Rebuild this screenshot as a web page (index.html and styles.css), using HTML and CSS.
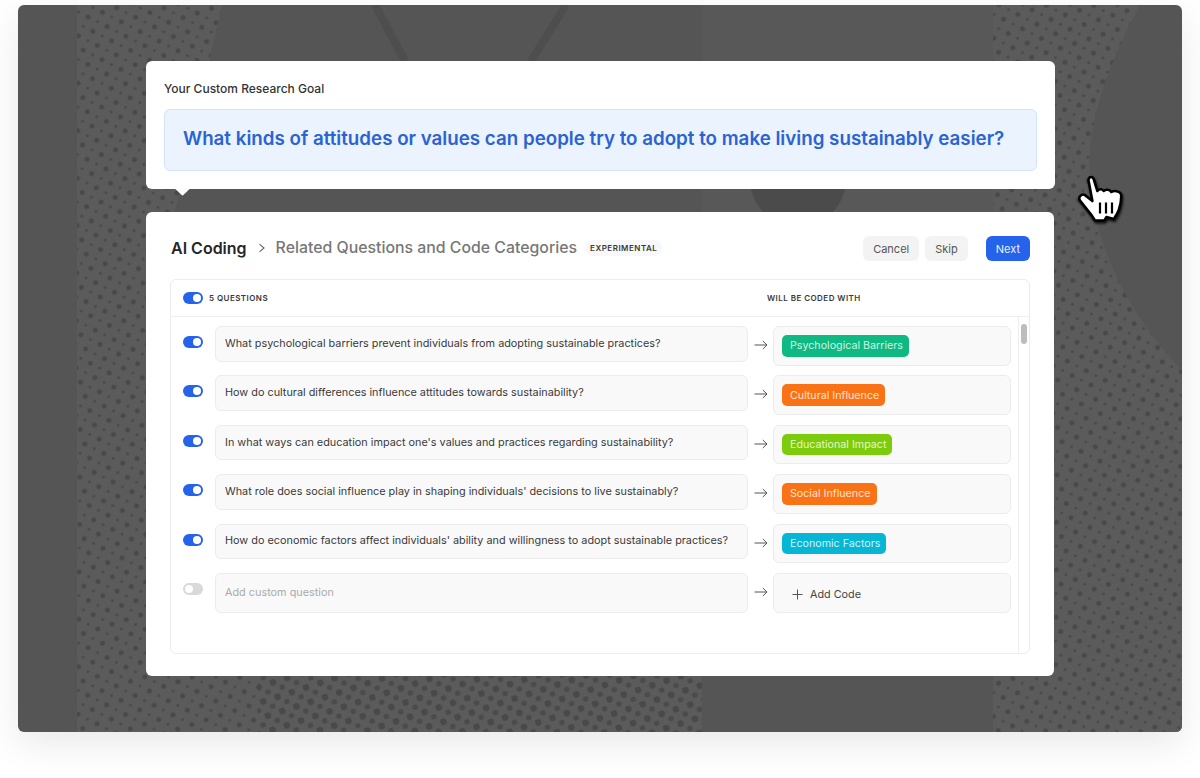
FILE: index.html
```html
<!DOCTYPE html>
<html lang="en">
<head>
<meta charset="utf-8">
<title>AI Coding</title>
<link rel="stylesheet" href="styles.css">
</head>
<body>
<div class="stage">
  <svg class="backdrop" viewBox="0 0 1164 727" aria-hidden="true">
    <defs>
      <pattern id="dots" width="15" height="15" patternUnits="userSpaceOnUse" patternTransform="rotate(-18)">
        <rect width="15" height="15" fill="#5b5b5b"/>
        <circle cx="3" cy="3" r="2.5" fill="#494949"/>
        <circle cx="10.5" cy="10.5" r="1.6" fill="#4b4b4b"/>
      </pattern>
      <pattern id="bigdots" width="15" height="15" patternUnits="userSpaceOnUse" patternTransform="rotate(-18)">
        <circle cx="3" cy="3" r="3.4" fill="#494949"/>
        <circle cx="10.5" cy="10.5" r="2.8" fill="#4b4b4b"/>
      </pattern>
      <clipPath id="leftshape"><path d="M59 0H204L157 207V650H684V727H59Z"/></clipPath>
    </defs>
    <rect x="684" y="0" width="291" height="212" fill="#585858"/>
    <circle cx="780" cy="174" r="48" fill="#4b4b4b"/>
    <path d="M357 0L387 56M548 0L513 56" stroke="#4e4e4e" stroke-width="8" fill="none"/>
    <path d="M59 0H204L157 207V650H684V727H59Z" fill="url(#dots)"/>
    <path d="M975 0H1122C1090 60 1068 120 1072 170C1076 250 1120 320 1164 365V727H975Z" fill="url(#dots)"/>
    <g clip-path="url(#leftshape)"><rect x="240" y="671" width="444" height="56" fill="url(#bigdots)"/></g>
  </svg>

  <section class="card goal">
    <div class="goal-label">Your Custom Research Goal</div>
    <div class="goal-box">What kinds of attitudes or values can people try to adopt to make living sustainably easier?</div>
    <span class="notch"></span>
  </section>

  <section class="card coding">
    <header class="head">
      <h1 class="title">AI Coding</h1>
      <svg class="chev" viewBox="0 0 8 10" aria-hidden="true"><path d="M1.5 1.2L6 5L1.5 8.8"/></svg>
      <h2 class="subtitle">Related Questions and Code Categories</h2>
      <span class="chip">EXPERIMENTAL</span>
      <div class="actions">
        <button class="btn">Cancel</button>
        <button class="btn">Skip</button>
        <button class="btn primary">Next</button>
      </div>
    </header>

    <div class="table">
      <div class="thead">
        <span class="toggle on"></span>
        <span class="cap count">5 QUESTIONS</span>
        <span class="cap coded">WILL BE CODED WITH</span>
      </div>
      <div class="tbody">
        <div class="rows">
          <div class="row">
            <span class="toggle on"></span>
            <div class="q">What psychological barriers prevent individuals from adopting sustainable practices?</div>
            <svg class="arrow" viewBox="0 0 14 10" aria-hidden="true"><path d="M0.5 5H13M8.8 1L13 5L8.8 9"/></svg>
            <div class="code"><span class="tag green">Psychological Barriers</span></div>
          </div>
          <div class="row">
            <span class="toggle on"></span>
            <div class="q">How do cultural differences influence attitudes towards sustainability?</div>
            <svg class="arrow" viewBox="0 0 14 10" aria-hidden="true"><path d="M0.5 5H13M8.8 1L13 5L8.8 9"/></svg>
            <div class="code"><span class="tag orange">Cultural Influence</span></div>
          </div>
          <div class="row">
            <span class="toggle on"></span>
            <div class="q">In what ways can education impact one's values and practices regarding sustainability?</div>
            <svg class="arrow" viewBox="0 0 14 10" aria-hidden="true"><path d="M0.5 5H13M8.8 1L13 5L8.8 9"/></svg>
            <div class="code"><span class="tag lime">Educational Impact</span></div>
          </div>
          <div class="row">
            <span class="toggle on"></span>
            <div class="q">What role does social influence play in shaping individuals' decisions to live sustainably?</div>
            <svg class="arrow" viewBox="0 0 14 10" aria-hidden="true"><path d="M0.5 5H13M8.8 1L13 5L8.8 9"/></svg>
            <div class="code"><span class="tag orange">Social Influence</span></div>
          </div>
          <div class="row">
            <span class="toggle on"></span>
            <div class="q">How do economic factors affect individuals' ability and willingness to adopt sustainable practices?</div>
            <svg class="arrow" viewBox="0 0 14 10" aria-hidden="true"><path d="M0.5 5H13M8.8 1L13 5L8.8 9"/></svg>
            <div class="code"><span class="tag cyan">Economic Factors</span></div>
          </div>
          <div class="row">
            <span class="toggle off"></span>
            <div class="q custom">Add custom question</div>
            <svg class="arrow" viewBox="0 0 14 10" aria-hidden="true"><path d="M0.5 5H13M8.8 1L13 5L8.8 9"/></svg>
            <div class="code add">
              <svg class="plus" viewBox="0 0 11 11" aria-hidden="true"><path d="M5.5 0.5V10.5M0.5 5.5H10.5"/></svg>
              <span>Add Code</span>
            </div>
          </div>
        </div>
        <div class="track"><span class="thumb"></span></div>
      </div>
    </div>
  </section>

  <svg class="cursor" viewBox="0 0 52 56" aria-hidden="true">
    <path class="hand" d="M12.4 8C13 4 17 4 18 8L21.4 19C23.4 16.6 26.4 16.8 27.6 19C29.8 17 33.8 17.4 35.4 20C38 18.2 43.6 19 45 22C45.8 27 44.4 33 42.8 38C41.4 42 39.6 44.4 37.8 47L30.5 45L28.4 48.5H19L15.7 43.4L3.8 28.4C2 25 5.6 21.4 8.8 23L16.4 29Z"/>
    <path class="bars" d="M24 30.5V41.5M30 30.5V41.5M36 30.5V41.5"/>
  </svg>
</div>
</body>
</html>
```

FILE: styles.css
```css
* { box-sizing: border-box; }
html, body { margin: 0; height: 100%; background: #fff; overflow: hidden; }
body { font-family: Inter, "Liberation Sans", sans-serif; color: #2f2f2f; }

.stage {
  position: relative;
  width: 1164px;
  height: 727px;
  margin: 5px 18px 0;
  padding: 56px 128px 0;
  background: #555;
  border-radius: 6px;
  box-shadow: 0 12px 36px rgba(0, 0, 0, .09);
}
.backdrop { position: absolute; inset: 0; width: 100%; height: 100%; border-radius: 6px; filter: blur(.4px); }

.card { position: relative; background: #fff; border-radius: 6px; }

.goal { width: 909px; height: 128px; padding: 20px 18px 0; }
.goal-label { font-size: 12px; font-weight: 500; line-height: 16px; color: #333; }
.goal-box {
  margin-top: 12px;
  height: 62px;
  padding: 0 0 3px 18px;
  display: flex;
  align-items: center;
  background: #eaf3fe;
  border: 1px solid #d3e4f8;
  border-radius: 6px;
  color: #2b63d3;
  font-size: 18.75px;
  font-weight: 600;
  white-space: nowrap;
}
.notch {
  position: absolute;
  left: 29px;
  bottom: -6px;
  width: 15px;
  height: 15px;
  background: #fff;
  border-radius: 2px;
  transform: rotate(45deg) scale(.8);
}

.coding { margin-top: 23px; width: 908px; height: 464px; padding: 24px 24px 0; }

.head { display: flex; align-items: center; height: 25px; padding-bottom: 2px; }
.title { margin: 0 0 0 1px; font-size: 16px; font-weight: 600; color: #262626; }
.chev { width: 8px; height: 10px; margin: 0 10px 0 11px; }
.chev path { fill: none; stroke: #666; stroke-width: 1.1; }
.subtitle { margin: 0; font-size: 15.85px; font-weight: 500; color: #777; white-space: nowrap; }
.chip {
  margin-left: 8px;
  padding: 3px 5px;
  background: #f8f8f8;
  border-radius: 8px;
  font-size: 8px;
  font-weight: 600;
  letter-spacing: .5px;
  color: #3a3a3a;
}
.actions { margin-left: auto; margin-bottom: -2px; display: flex; gap: 6px; }
.btn {
  height: 25px;
  padding: 0 10px;
  border: 0;
  border-radius: 6px;
  background: #f3f3f3;
  font: 400 11px Inter, "Liberation Sans", sans-serif;
  color: #555;
}
.primary { margin-left: 12px; background: #2563eb; color: #eaf1ff; }

.table {
  margin-top: 18px;
  width: 860px;
  height: 375px;
  border: 1px solid #ececec;
  border-radius: 6px;
}
.thead {
  position: relative;
  display: flex;
  align-items: center;
  height: 37px;
  padding-left: 12px;
  border-bottom: 1px solid #eeeeee;
}
.cap { font-size: 8px; font-weight: 600; letter-spacing: .45px; color: #3a3a3a; padding-bottom: 1px; }
.count { margin-left: 6px; }
.coded { position: absolute; left: 596px; }

.tbody { display: flex; height: 336px; }
.rows {
  flex: 1;
  display: flex;
  flex-direction: column;
  gap: 9.8px;
  padding: 9px 7px 0 12px;
}
.row {
  display: grid;
  grid-template-columns: 32px 533px 25px 238px;
  height: 39.6px;
  align-items: start;
}

.toggle {
  position: relative;
  display: block;
  width: 20px;
  height: 12px;
  border-radius: 6px;
}
.row .toggle { margin-top: 10px; }
.toggle::after {
  content: "";
  position: absolute;
  top: 2px;
  width: 8px;
  height: 8px;
  border-radius: 50%;
  background: #fff;
}
.on { background: #2563eb; }
.on::after { right: 2px; }
.off { background: #d9d9d9; }
.off::after { left: 2px; }

.q {
  height: 35.6px;
  padding: 0 0 2px 9px;
  display: flex;
  align-items: center;
  background: #f9f9f9;
  border: 1px solid #ececec;
  border-radius: 6px;
  font-size: 10.85px;
  color: #3a3a3a;
  white-space: nowrap;
}
.custom { height: 39.6px; padding-bottom: 1px; color: #aaa; }
.arrow { width: 14px; height: 10px; margin: 14px 0 0 6px; }
.arrow path { fill: none; stroke: #555; stroke-width: 1; }

.code {
  height: 39.6px;
  padding-left: 8px;
  display: flex;
  align-items: center;
  background: #f9f9f9;
  border: 1px solid #ececec;
  border-radius: 6px;
}
.tag {
  height: 21.5px;
  padding: 0 6px 0 8px;
  display: flex;
  align-items: center;
  border-radius: 5px;
  font-size: 10.7px;
}
.green { background: #10b981; color: #c9f5e4; }
.orange { background: #f97316; color: #ffe3cc; }
.lime { background: #7ccb0c; color: #e4f8c4; }
.cyan { background: #06b6d4; color: #cff5fb; }

.add { padding: 3px 0 0 18px; gap: 7px; font-size: 10.8px; color: #444; }
.plus { width: 11px; height: 11px; }
.plus path { fill: none; stroke: #555; stroke-width: 1; }

.track {
  width: 11px;
  border-left: 1px solid #eeeeee;
  padding: 7px 0 0 1px;
}
.thumb { display: block; width: 6px; height: 20px; margin-left: 1px; border-radius: 3px; background: #bdbdbd; }

.cursor {
  position: absolute;
  left: 1058px;
  top: 167px;
  width: 52px;
  height: 56px;
  filter: drop-shadow(1px 2px 1px rgba(0, 0, 0, .75));
}
.hand { fill: #fff; stroke: #000; stroke-width: 2.6; stroke-linejoin: round; }
.bars { fill: none; stroke: #000; stroke-width: 2.2; }
```
